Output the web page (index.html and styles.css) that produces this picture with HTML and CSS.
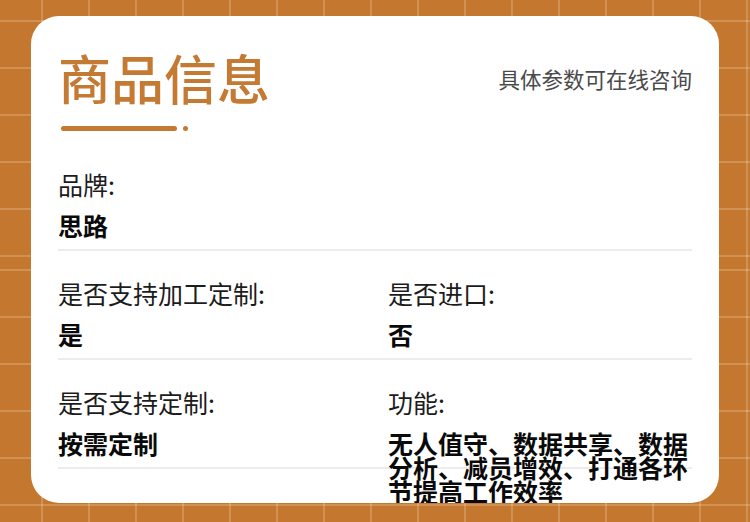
FILE: index.html
```html
<!DOCTYPE html>
<html lang="zh-CN">
<head>
<meta charset="utf-8">
<title>商品信息</title>
<link rel="stylesheet" href="styles.css">
</head>
<body>
<div class="page">
  <div class="card">
    <div class="header">
      <div class="title-wrap">
        <h1 class="title">商品信息</h1>
        <div class="deco"><span class="bar"></span><span class="dot"></span></div>
      </div>
      <div class="subtitle">具体参数可在线咨询</div>
    </div>
    <div class="row">
      <div class="item">
        <div class="label">品牌:</div>
        <div class="value">思路</div>
      </div>
    </div>
    <div class="row">
      <div class="item">
        <div class="label">是否支持加工定制:</div>
        <div class="value">是</div>
      </div>
      <div class="item">
        <div class="label">是否进口:</div>
        <div class="value">否</div>
      </div>
    </div>
    <div class="row">
      <div class="item">
        <div class="label">是否支持定制:</div>
        <div class="value">按需定制</div>
      </div>
      <div class="item">
        <div class="label">功能:</div>
        <div class="value">无人值守、数据共享、数据分析、减员增效、打通各环节提高工作效率</div>
      </div>
    </div>
  </div>
</div>
</body>
</html>
```

FILE: styles.css
```css
html, body {
  margin: 0;
  padding: 0;
}
body {
  width: 750px;
  height: 522px;
  overflow: hidden;
  background-color: #c4782f;
  background-image:
    repeating-linear-gradient(to right, transparent 0 41px, rgba(255, 235, 210, 0.22) 41px 43px, transparent 43px 47px),
    repeating-linear-gradient(to bottom, transparent 0 20px, rgba(255, 235, 210, 0.22) 20px 22px, transparent 22px 47px),
    repeating-linear-gradient(to bottom, transparent 0 6px, rgba(255, 235, 210, 0.22) 6px 8px, transparent 8px 47px);
  background-size: 100% 100%, 100% 263px, 100% 259px;
  background-position: 0 0, 0 0, 0 263px;
  background-repeat: no-repeat;
  font-family: "Noto Sans CJK SC", "Noto Sans", sans-serif;
}
.page {
  padding: 16px 0 0 31px;
}
.card {
  width: 688px;
  height: 487px;
  box-sizing: border-box;
  padding: 29px 27px 0 27px;
  background: #ffffff;
  border-radius: 28px;
  overflow: hidden;
}
.header {
  display: flex;
  justify-content: space-between;
  align-items: flex-start;
}
.title {
  margin: 0;
  font-size: 53px;
  line-height: 64px;
  font-weight: 500;
  color: #c47a32;
}
.deco {
  display: flex;
  align-items: center;
  gap: 6px;
  margin: 17px 0 0 3px;
}
.bar {
  width: 116px;
  height: 5px;
  border-radius: 3px;
  background: #c47a32;
}
.dot {
  width: 5px;
  height: 5px;
  border-radius: 50%;
  background: #c47a32;
}
.subtitle {
  margin-top: 19px;
  font-size: 21.5px;
  line-height: 30px;
  color: #4a4a4a;
}
.header + .row {
  margin-top: 10.5px;
}
.row {
  display: grid;
  grid-template-columns: 330px 1fr;
  height: 109px;
  box-sizing: border-box;
  padding-top: 30px;
  border-bottom: 2px solid #ececec;
}
.label {
  font-size: 25px;
  line-height: 24px;
  color: #1c1c1c;
}
.value {
  margin-top: 17px;
  font-size: 25px;
  line-height: 24px;
  font-weight: 700;
  color: #0a0a0a;
}
```
